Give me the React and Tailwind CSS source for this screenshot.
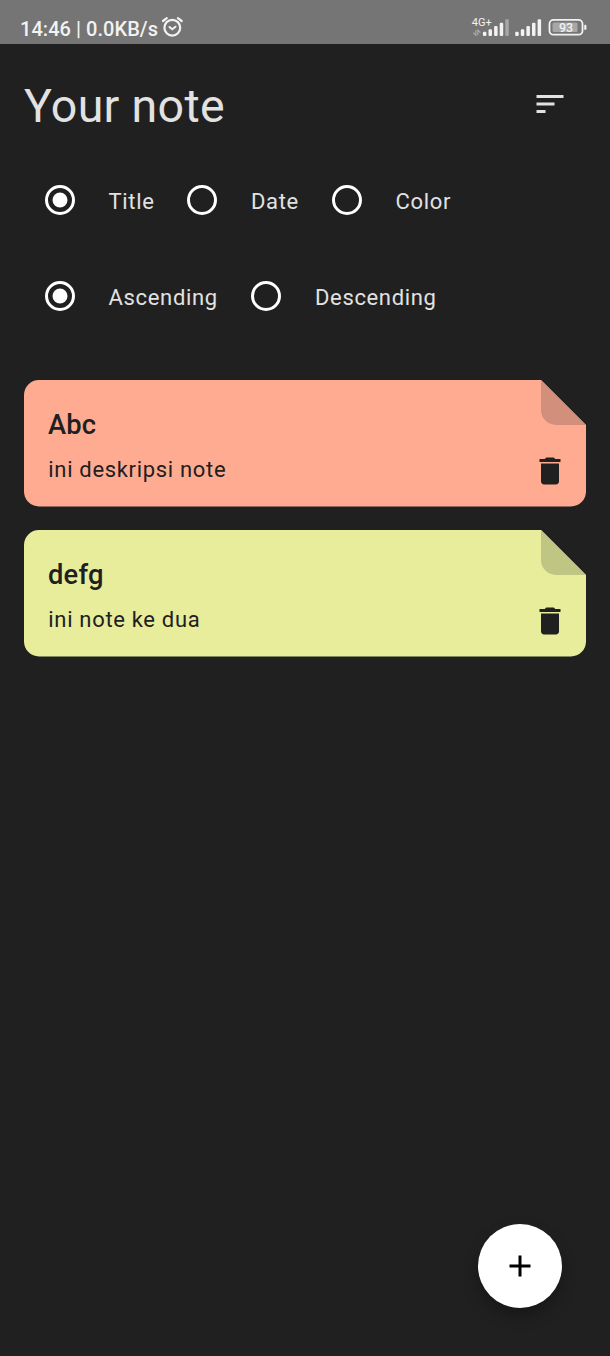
import React from "react";

function Glyph({ d, className = "" }) {
  return (
    <svg viewBox="0 0 24 24" className={`size-9 shrink-0 fill-current ${className}`} aria-hidden="true">
      <path d={d} />
    </svg>
  );
}

const ICONS = {
  sort: "M3 18h6v-2H3v2zM3 6v2h18V6H3zm0 7h12v-2H3v2z",
  trash: "M6 19c0 1.1.9 2 2 2h8c1.1 0 2-.9 2-2V7H6v12zM19 4h-3.5l-1-1h-5l-1 1H5v2h14V4z",
  add: "M19 13h-6v6h-2v-6H5v-2h6V5h2v6h6v2z",
};

// Top edge of each signal bar, shortest first.
const BAR_TOPS = [31.8, 29.3, 26, 22.7, 19.3];

function SignalBars({ x, dimLast }) {
  return BAR_TOPS.map((top, i) => (
    <rect key={top} x={x + i * 5.6} y={top} width="3.5" height={36 - top} rx="1.1" opacity={dimLast && i === 4 ? 0.4 : 1} />
  ));
}

function StatusBar() {
  return (
    <header className="flex h-11 shrink-0 items-start justify-between bg-[#757575] pl-5 pr-[23px] text-[#f2f2f2]">
      <div className="flex items-start">
        <span className="w-[138px] whitespace-nowrap pt-[17px] text-[20px] leading-6 font-medium tracking-[0.05px]">14:46 | 0.0KB/s</span>
        <svg width="24" height="24" viewBox="0 0 24 24" className="ml-[3px] mt-[15px]" fill="none" stroke="currentColor" strokeWidth="2.2" strokeLinecap="round" aria-hidden="true">
          <circle cx="11.3" cy="12.7" r="7.9" />
          <path d="M2 6 5.8 3.2M20.7 6 16.9 3.2" />
          <path d="m8.5 12 2.8 2.3 3.2-2.6" strokeWidth="2" />
        </svg>
      </div>
      <svg width="116" height="44" viewBox="0 0 116 44" fill="currentColor" aria-hidden="true">
        <text x="0.7" y="26.4" fontSize="11.3" fontFamily="Roboto, sans-serif" textLength="20" lengthAdjust="spacingAndGlyphs">4G+</text>
        <g opacity=".45" fill="none" stroke="currentColor" strokeWidth="1.1">
          <path d="M4.9 30v5.2L2.2 32.6M6.9 35.2V30l2.5 2.6" />
        </g>
        <SignalBars x={11.9} dimLast />
        <SignalBars x={44.2} />
        <rect x="78.5" y="19.9" width="33" height="14.8" rx="4" fill="none" stroke="currentColor" strokeWidth="1.8" />
        <rect x="81.5" y="22.5" width="25" height="9.6" rx="1.5" opacity=".4" />
        <rect x="113.2" y="24.8" width="2.2" height="5" rx=".9" />
        <text x="95" y="32.2" fontSize="12.5" fontWeight="500" textAnchor="middle" fontFamily="Roboto, sans-serif">93</text>
      </svg>
    </header>
  );
}

function RadioOption({ name, label, defaultChecked, width }) {
  return (
    <label className={`flex h-[72px] shrink-0 items-center ${width}`}>
      <input type="radio" name={name} defaultChecked={defaultChecked} className="peer sr-only" />
      <svg viewBox="0 0 30 30" className="mx-[21px] size-[30px] shrink-0 text-transparent peer-checked:text-white" aria-hidden="true">
        <circle cx="15" cy="15" r="13.5" fill="none" className="stroke-white" strokeWidth="3" />
        <circle cx="15" cy="15" r="7.5" fill="currentColor" />
      </svg>
      <span className="ml-[12.6px] whitespace-nowrap pt-[3px] text-[22px] leading-8 tracking-[0.65px]">{label}</span>
    </label>
  );
}

function NoteCard({ title, body, fill, fold }) {
  return (
    <article className="relative isolate flex h-[127px] justify-between pl-6 text-[#202020]">
      <svg viewBox="0 0 562 127" className="absolute inset-0 -z-10 h-full w-full" aria-hidden="true">
        <path className={fill} d="M15 0H517L562 45V111.5A15 15 0 0 1 547 126.5H15A15 15 0 0 1 0 111.5V15A15 15 0 0 1 15 0Z" />
        <path className={fold} d="M517 0 562 45H532A15 15 0 0 1 517 30Z" />
      </svg>
      <div className="flex flex-col pt-[27px]">
        <h2 className="text-[27.3px] leading-9 font-medium tracking-[0.2px]">{title}</h2>
        <p className="mt-[11px] pl-[0.3px] text-[22px] leading-8 tracking-[0.68px]">{body}</p>
      </div>
      <button aria-label="Delete note" className="flex size-[72px] items-center justify-center self-end">
        <Glyph d={ICONS.trash} />
      </button>
    </article>
  );
}

export default function App() {
  return (
    <div className="flex h-[1356px] w-[610px] flex-col overflow-hidden bg-[#202020] font-['Roboto',sans-serif] text-[#e2e2e2]">
      <StatusBar />
      <main className="flex grow flex-col p-6">
        <div className="flex h-[72px] items-center justify-between">
          <h1 className="pt-1 text-[46.5px] leading-[54px] tracking-[0.34px]">Your note</h1>
          <button aria-label="Sort" className="flex size-[72px] items-center justify-center">
            <Glyph d={ICONS.sort} />
          </button>
        </div>
        <div className="mt-6 flex">
          <RadioOption name="field" label="Title" defaultChecked width="w-[142.4px]" />
          <RadioOption name="field" label="Date" width="w-[144.6px]" />
          <RadioOption name="field" label="Color" width="w-[144px]" />
        </div>
        <div className="mt-6 flex">
          <RadioOption name="direction" label="Ascending" defaultChecked width="w-[206.4px]" />
          <RadioOption name="direction" label="Descending" width="w-[220px]" />
        </div>
        <section className="mt-12 flex flex-col gap-[23px]">
          <NoteCard title="Abc" body="ini deskripsi note" fill="fill-[#ffab91]" fold="fill-[#d18f7c]" />
          <NoteCard title="defg" body="ini note ke dua" fill="fill-[#e7ed9b]" fold="fill-[#bfc583]" />
        </section>
        <button aria-label="Add note" className="mt-auto mr-6 mb-6 flex size-[84px] items-center justify-center self-end rounded-full bg-white text-black shadow-[0_8px_15px_rgba(0,0,0,0.28)]">
          <Glyph d={ICONS.add} />
        </button>
      </main>
    </div>
  );
}
